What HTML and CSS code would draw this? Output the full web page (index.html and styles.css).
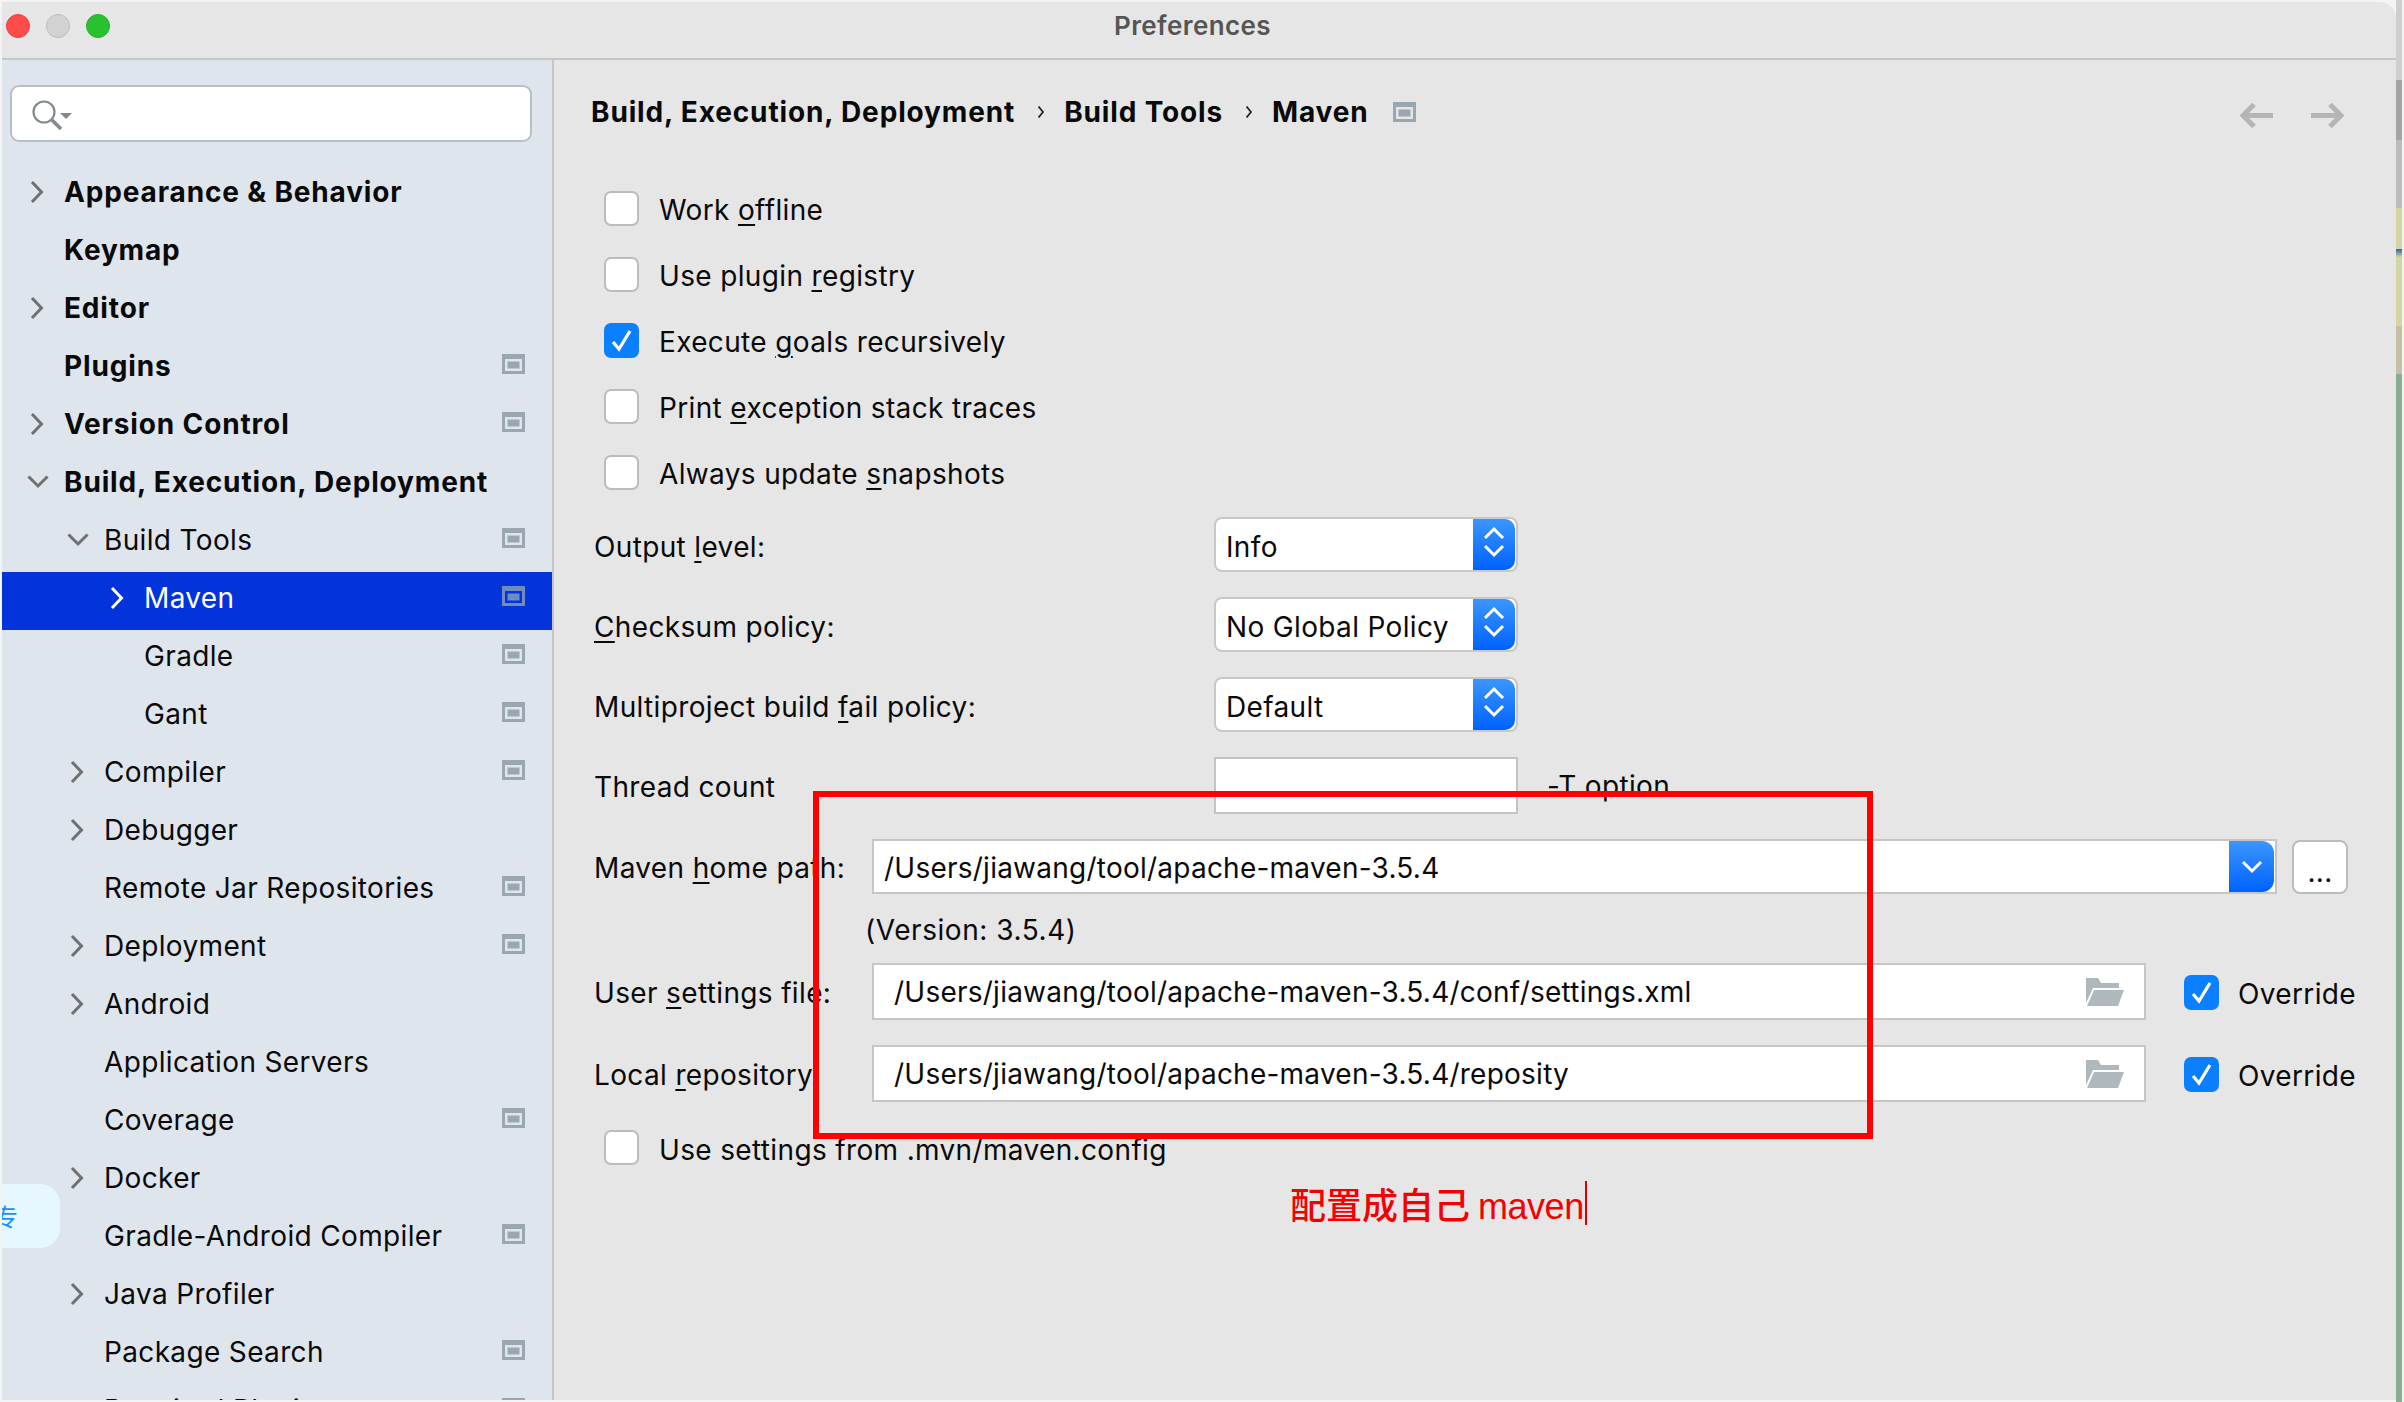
FILE: index.html
```html
<!DOCTYPE html>
<html lang="en">
<head>
<meta charset="utf-8">
<title>Preferences</title>
<link rel="stylesheet" href="styles.css">
</head>
<body>
<svg class="defs" aria-hidden="true">
  <symbol id="right" viewBox="0 0 41 24"><path d="M8 2l9.500 10L8 22" fill="none" stroke="currentColor" stroke-width="3"/></symbol>
  <symbol id="down" viewBox="0 0 41 24"><path d="M4.500 6.500L14 16l9.500-9.500" fill="none" stroke="currentColor" stroke-width="3"/></symbol>
  <symbol id="frame" viewBox="0 0 23 20"><path fill-rule="evenodd" d="M0 0h23v20H0zM3 5v12h17V5z" fill="currentColor"/><rect x="5.500" y="7.500" width="12" height="7" fill="currentColor"/></symbol>
  <symbol id="folder" viewBox="0 0 38 28"><path d="M0 0h12l3 5h18v5H7L0 25z" fill="#afb9bd"/><path d="M8 12h30l-6 16H1z" fill="#afb9bd"/></symbol>
  <symbol id="check" viewBox="0 0 35 35"><path d="M9 19l6 7 11-18" fill="none" stroke="#fff" stroke-width="3.200"/></symbol>
  <symbol id="updown" viewBox="0 0 42 50"><path d="M12 19l9-9 9 9M12 27l9 9 9-9" fill="none" stroke="#fff" stroke-width="3"/></symbol>
</svg>
<div class="desktop">
  <div class="window">
    <header class="titlebar">
      <span class="light light-red"></span>
      <span class="light light-gray"></span>
      <span class="light light-green"></span>
      <h1 class="title">Preferences</h1>
    </header>
    <div class="body">
      <nav class="sidebar">
        <div class="search">
          <svg class="search-icon" viewBox="0 0 42 30"><circle cx="12" cy="12" r="10.500" fill="none" stroke="#7f8b91" stroke-width="2.200"/><path d="M20 20l9 9" stroke="#7f8b91" stroke-width="3.500"/><path d="M28 13h12l-6 6z" fill="#7f8b91"/></svg>
        </div>
        <div class="row l0 strong"><svg class="chev"><use href="#right"/></svg><span>Appearance &amp; Behavior</span></div>
        <div class="row l0 strong"><span class="nochev"></span><span>Keymap</span></div>
        <div class="row l0 strong"><svg class="chev"><use href="#right"/></svg><span>Editor</span></div>
        <div class="row l0 strong"><span class="nochev"></span><span>Plugins</span><svg class="frame"><use href="#frame"/></svg></div>
        <div class="row l0 strong"><svg class="chev"><use href="#right"/></svg><span>Version Control</span><svg class="frame"><use href="#frame"/></svg></div>
        <div class="row l0 strong"><svg class="chev"><use href="#down"/></svg><span>Build, Execution, Deployment</span></div>
        <div class="row l1"><svg class="chev"><use href="#down"/></svg><span>Build Tools</span><svg class="frame"><use href="#frame"/></svg></div>
        <div class="row l2 selected"><svg class="chev"><use href="#right"/></svg><span>Maven</span><svg class="frame"><use href="#frame"/></svg></div>
        <div class="row l2"><span class="nochev"></span><span>Gradle</span><svg class="frame"><use href="#frame"/></svg></div>
        <div class="row l2"><span class="nochev"></span><span>Gant</span><svg class="frame"><use href="#frame"/></svg></div>
        <div class="row l1"><svg class="chev"><use href="#right"/></svg><span>Compiler</span><svg class="frame"><use href="#frame"/></svg></div>
        <div class="row l1"><svg class="chev"><use href="#right"/></svg><span>Debugger</span></div>
        <div class="row l1"><span class="nochev"></span><span>Remote Jar Repositories</span><svg class="frame"><use href="#frame"/></svg></div>
        <div class="row l1"><svg class="chev"><use href="#right"/></svg><span>Deployment</span><svg class="frame"><use href="#frame"/></svg></div>
        <div class="row l1"><svg class="chev"><use href="#right"/></svg><span>Android</span></div>
        <div class="row l1"><span class="nochev"></span><span>Application Servers</span></div>
        <div class="row l1"><span class="nochev"></span><span>Coverage</span><svg class="frame"><use href="#frame"/></svg></div>
        <div class="row l1"><svg class="chev"><use href="#right"/></svg><span>Docker</span></div>
        <div class="row l1"><span class="nochev"></span><span>Gradle-Android Compiler</span><svg class="frame"><use href="#frame"/></svg></div>
        <div class="row l1"><svg class="chev"><use href="#right"/></svg><span>Java Profiler</span></div>
        <div class="row l1"><span class="nochev"></span><span>Package Search</span><svg class="frame"><use href="#frame"/></svg></div>
        <div class="row l1"><span class="nochev"></span><span>Required Plugins</span><svg class="frame"><use href="#frame"/></svg></div>
      </nav>
      <main class="panel">
        <div class="crumbs">
          <span class="crumb crumb-a">Build, Execution, Deployment</span>
          <svg class="sep" viewBox="0 0 8 14"><path d="M1.500 1.500L6 7l-4.500 5.500" fill="none" stroke="#222" stroke-width="1.800"/></svg>
          <span class="crumb">Build Tools</span>
          <svg class="sep" viewBox="0 0 8 14"><path d="M1.500 1.500L6 7l-4.500 5.500" fill="none" stroke="#222" stroke-width="1.800"/></svg>
          <span class="crumb">Maven</span>
          <svg class="frame crumb-frame"><use href="#frame"/></svg>
          <div class="nav-arrows">
            <svg class="arrow" viewBox="0 0 33 25"><path d="M33 12.500H4M14 1.500L3 12.500l11 11" fill="none" stroke="#b5b5b5" stroke-width="5"/></svg>
            <svg class="arrow" viewBox="0 0 33 25"><path d="M0 12.500h29M19 1.500l11 11-11 11" fill="none" stroke="#b5b5b5" stroke-width="5"/></svg>
          </div>
        </div>

        <label class="check-row"><span class="box"></span><span class="check-text">Work <u>o</u>ffline</span></label>
        <label class="check-row"><span class="box"></span><span class="check-text">Use plugin <u>r</u>egistry</span></label>
        <label class="check-row"><span class="box on"><svg class="tick"><use href="#check"/></svg></span><span class="check-text">Execute <u>g</u>oals recursively</span></label>
        <label class="check-row"><span class="box"></span><span class="check-text">Print <u>e</u>xception stack traces</span></label>
        <label class="check-row"><span class="box"></span><span class="check-text">Always update <u>s</u>napshots</span></label>

        <div class="form-row"><span class="label wide">Output <u>l</u>evel:</span><div class="select"><span class="select-text">Info</span><span class="stepper"><svg class="updown"><use href="#updown"/></svg></span></div></div>
        <div class="form-row"><span class="label wide"><u>C</u>hecksum policy:</span><div class="select"><span class="select-text">No Global Policy</span><span class="stepper"><svg class="updown"><use href="#updown"/></svg></span></div></div>
        <div class="form-row"><span class="label wide">Multiproject build <u>f</u>ail policy:</span><div class="select"><span class="select-text">Default</span><span class="stepper"><svg class="updown"><use href="#updown"/></svg></span></div></div>
        <div class="form-row"><span class="label wide">Thread count</span><div class="thread-box"></div><span class="t-option">-T option</span></div>

        <div class="path-row maven-row">
          <span class="label narrow">Maven <u>h</u>ome path:</span>
          <div class="field combo"><span class="combo-text">/Users/jiawang/tool/apache-maven-3.5.4</span><span class="combo-btn"><svg class="combo-chev" viewBox="0 0 22 14"><path d="M2 2l9 9 9-9" fill="none" stroke="#fff" stroke-width="3"/></svg></span></div>
          <div class="dots">...</div>
        </div>
        <div class="version">(Version: 3.5.4)</div>
        <div class="path-row">
          <span class="label narrow">User <u>s</u>ettings file:</span>
          <div class="field file"><span class="file-text">/Users/jiawang/tool/apache-maven-3.5.4/conf/settings.xml</span><svg class="folder"><use href="#folder"/></svg></div>
          <span class="box on override-box"><svg class="tick"><use href="#check"/></svg></span><span class="override">Override</span>
        </div>
        <div class="path-row local-row">
          <span class="label narrow">Local <u>r</u>epository</span>
          <div class="field file"><span class="file-text">/Users/jiawang/tool/apache-maven-3.5.4/reposity</span><svg class="folder"><use href="#folder"/></svg></div>
          <span class="box on override-box"><svg class="tick"><use href="#check"/></svg></span><span class="override">Override</span>
        </div>
        <label class="check-row last-check"><span class="box"></span><span class="check-text">Use settings from .mvn/maven.config</span></label>
      </main>
    </div>
    <div class="widget"><span class="widget-text">专</span></div>
    <div class="red-rect"></div>
    <div class="red-note">配置成自己 <span class="red-latin">maven</span></div>
  </div>
  <div class="strip">
    <span class="seg seg-a"></span>
    <span class="seg seg-b"></span>
    <span class="seg seg-c"></span>
    <span class="seg seg-d"></span>
    <span class="seg seg-e"></span>
    <span class="seg seg-f"></span>
    <span class="seg seg-g"></span>
  </div>
</div>
</body>
</html>
```
FILE: styles.css
```css
* { box-sizing: border-box; }
html, body { margin: 0; padding: 0; }
body { width: 2404px; height: 1402px; overflow: hidden; background: #f4f4f4; font-family: Inter, "Noto Sans", sans-serif; color: #0a0a0a; }
.defs { width: 0; height: 0; position: absolute; }
u { text-decoration-thickness: 2px; text-underline-offset: 4px; }

.desktop { display: flex; width: 2404px; height: 1402px; padding: 2px 0 2px 2px; }
.window { position: relative; width: 2394px; height: 1398px; background: #e6e6e6; border-top-right-radius: 16px; overflow: hidden; flex: none; display: flex; flex-direction: column; }

.titlebar { display: flex; align-items: center; flex: none; height: 58px; padding: 2px 0 10px 4px; gap: 16px; border-bottom: 2px solid #c6c6c6; }
.light { width: 24px; height: 24px; border-radius: 50%; flex: none; }
.light-red { background: #ff4b49; border: 1px solid #ee4240; }
.light-gray { background: #d2d2d2; border: 1px solid #bdbdbd; }
.light-green { background: #28c22e; border: 1px solid #24b12a; }
.title { flex: 1; margin: -2px 0 0 -106px; padding-right: 31px; text-align: center; font-size: 26px; font-weight: 600; color: #555; letter-spacing: 0.4px; }

.body { display: flex; flex: 1; min-height: 0; }
.sidebar { width: 552px; flex: none; background: #dfe5ed; border-right: 2px solid #c6c6c6; overflow: hidden; }
.search { height: 57px; margin: 25px 20px 24px 8px; background: #fff; border: 2px solid #b8bfc6; border-radius: 9px; padding: 13px 0 0 20px; }
.search-icon { display: block; width: 42px; height: 30px; }

.row { display: flex; align-items: center; height: 58px; font-size: 28px; letter-spacing: 0.35px; padding-right: 27px; padding-bottom: 6px; color: #0a0a0a; }
.strong { font-weight: 700; letter-spacing: 0.85px; }
.l0 { padding-left: 22px; }
.l1 { padding-left: 62px; }
.l2 { padding-left: 102px; }
.chev { width: 41px; height: 24px; flex: none; margin-right: -1px; color: #707070; }
.nochev { width: 40px; flex: none; }
.frame { width: 23px; height: 20px; flex: none; margin-left: auto; margin-top: -4px; color: #9aa7b0; }
.selected { background: #0233db; color: #fff; }
.selected .chev { color: #fff; }
.selected .frame { color: #6f8bbf; }

.panel { flex: 1; min-width: 0; padding-left: 40px; }
.crumbs { display: flex; align-items: center; height: 115px; padding: 0 0 11px 0; margin-left: -3px; }
.crumb { font-size: 28px; font-weight: 700; letter-spacing: 0.85px; }
.sep { width: 8px; height: 14px; margin: 0 19px 0 22px; flex: none; }
.crumb-frame { margin: 0 0 0 24px; color: #9aa7b0; }
.nav-arrows { display: flex; gap: 38px; margin-left: auto; margin-right: 52px; padding-top: 7px; }
.arrow { width: 33px; height: 25px; }

.check-row { display: flex; align-items: center; height: 66px; padding-left: 10px; font-size: 28px; letter-spacing: 0.35px; }
.box { display: flex; width: 35px; height: 35px; flex: none; background: #fff; border: 2px solid #bcbcbc; border-radius: 7px; }
.box.on { background: #0a7fff; border: 0; }
.tick { width: 35px; height: 35px; }
.check-text { margin-left: 20px; padding-top: 4px; }

.form-row { display: flex; align-items: center; height: 80px; font-size: 28px; letter-spacing: 0.35px; }
.label { padding-top: 3px; flex: none; }
.wide { width: 620px; }
.narrow { width: 278px; }
.select { display: flex; width: 304px; height: 55px; background: #fff; border: 2px solid #c8c8c8; border-radius: 8px; margin-top: -2px; overflow: hidden; align-items: stretch; }
.select-text { flex: 1; padding: 11px 0 0 10px; line-height: 34px; }
.stepper { width: 42px; flex: none; background: linear-gradient(#3b96ff, #0062ff); border-radius: 0 10px 10px 0; margin-right: 1px; }
.updown { display: block; width: 42px; height: 50px; }
.thread-box { width: 304px; height: 57px; background: #fff; border: 2px solid #c4c4c4; }
.t-option { margin-left: 29px; padding-top: 1px; }

.path-row { display: flex; align-items: center; height: 57px; font-size: 28px; letter-spacing: 0.35px; }
.maven-row { height: 55px; margin-top: 14px; }
.local-row { margin-top: 25px; }
.field { display: flex; align-items: center; background: #fff; border: 2px solid #c6c6c6; height: 100%; letter-spacing: 0.24px; }
.combo { width: 1405px; }
.combo-text { flex: 1; padding: 2px 0 0 10px; }
.combo-btn { display: flex; align-items: center; justify-content: center; align-self: stretch; width: 45px; margin-right: 1px; background: linear-gradient(#3b96ff, #0062ff); border-radius: 0 12px 12px 0; }
.combo-chev { width: 22px; height: 14px; }
.dots { display: flex; justify-content: center; align-items: flex-end; width: 56px; height: 54px; margin-left: 15px; padding-bottom: 5px; background: #fff; border: 2px solid #bcbcbc; border-radius: 8px; line-height: 30px; }
.version { height: 69px; padding: 19px 0 0 271px; font-size: 28px; line-height: 34px; letter-spacing: 0.55px; }
.file { width: 1274px; }
.file-text { flex: 1; padding-left: 20px; }
.folder { width: 38px; height: 28px; margin-right: 20px; flex: none; }
.override-box { margin-left: 38px; margin-top: 1px; }
.override { margin-left: 19px; padding-top: 5px; }
.last-check { height: 35px; margin-top: 28px; }

.widget { position: absolute; left: 0; top: 1182px; width: 58px; height: 64px; background: #e6f7ff; border-radius: 0 20px 20px 0; overflow: hidden; }
.widget-text { position: absolute; left: -8px; top: 17px; font-family: "Noto Sans CJK SC", sans-serif; font-size: 24px; line-height: 30px; color: #1890ff; }

.red-rect { position: absolute; left: 811px; top: 789px; width: 1060px; height: 348px; border: 6px solid #ff0000; }
.red-note { position: absolute; left: 1288px; top: 1179px; height: 44px; padding-right: 1px; border-right: 2px solid #e00000; font-family: "Noto Sans CJK SC", sans-serif; font-size: 36px; font-weight: 500; line-height: 44px; color: #f50000; white-space: nowrap; }
.red-latin { font-family: "Liberation Sans", sans-serif; font-size: 36px; font-weight: 400; letter-spacing: -0.5px; }

.strip { display: flex; flex-direction: column; width: 6px; height: 1402px; margin-top: -2px; flex: none; }
.seg { display: block; flex: none; width: 100%; }
.seg-a { height: 80px; background: #cfcfcf; }
.seg-b { height: 60px; background: #a4a4a4; }
.seg-c { height: 68px; background: #bcbcbc; }
.seg-d { height: 58px; background: linear-gradient(#d4d6a2 70%, #1d5fa8 70%, #d4d6a2 85%); }
.seg-e { height: 60px; background: #d4d6a2; }
.seg-f { height: 48px; background: #c5c0a4; }
.seg-g { height: 1028px; background: #88ad8f; }
```
